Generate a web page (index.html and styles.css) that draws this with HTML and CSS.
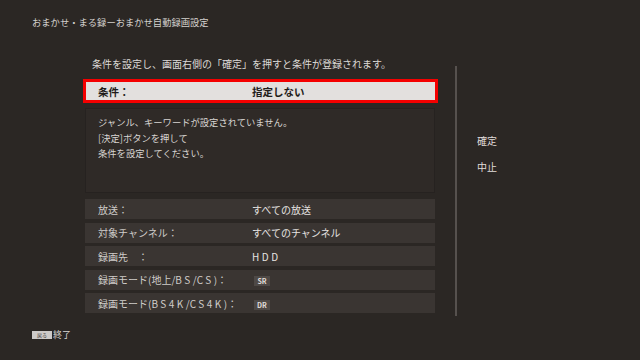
FILE: index.html
```html
<!DOCTYPE html>
<html lang="ja">
<head>
  <meta charset="UTF-8">
  <meta name="viewport" content="width=device-width, initial-scale=1.0">
  <title>おまかせ自動録画設定</title>
  <link rel="stylesheet" href="styles.css">
</head>
<body>
  <div class="page">
    <div class="title">おまかせ・まる録ーおまかせ自動録画設定</div>

    <div class="main">
      <div class="content">
        <div class="lead">条件を設定し、画面右側の「確定」を押すと条件が登録されます。</div>

        <div class="selected">
          <span class="label">条件：</span>
          <span class="value">指定しない</span>
        </div>

        <div class="message">
          ジャンル、キーワードが設定されていません。<br>
          [決定]ボタンを押して<br>
          条件を設定してください。
        </div>

        <div class="rows">
          <div class="row">
            <span class="label">放送：</span>
            <span class="value">すべての放送</span>
          </div>
          <div class="row">
            <span class="label">対象チャンネル：</span>
            <span class="value">すべてのチャンネル</span>
          </div>
          <div class="row">
            <span class="label">録画先　：</span>
            <span class="value latin">HDD</span>
          </div>
          <div class="row">
            <span class="label">録画モード(地上/<span class="latin">BS</span>/<span class="latin">CS</span>)：</span>
            <span class="value"><span class="badge">SR</span></span>
          </div>
          <div class="row">
            <span class="label">録画モード(<span class="latin">BS4K</span>/<span class="latin">CS4K</span>)：</span>
            <span class="value"><span class="badge">DR</span></span>
          </div>
        </div>
      </div>

      <div class="side">
        <div class="side-item">確定</div>
        <div class="side-item">中止</div>
      </div>
    </div>

    <div class="footer">
      <span class="key">戻る</span>
      <span class="key-text">終了</span>
    </div>
  </div>
</body>
</html>
```

FILE: styles.css
```css
html, body {
  margin: 0;
  padding: 0;
  background-color: #2b2724;
}
body {
  font-family: "Noto Sans CJK JP", "Noto Sans", sans-serif;
  color: #d9d6d3;
}
.page {
  width: 640px;
  height: 360px;
  display: flex;
  flex-direction: column;
  overflow: hidden;
}
.title {
  padding: 15px 0 0 32px;
  font-size: 9.3px;
  line-height: 14px;
  color: #d4d1ce;
}
.main {
  display: flex;
  margin-top: 27px;
}
.content {
  margin-left: 83px;
  width: 355px;
}
.lead {
  padding-left: 9px;
  font-size: 10px;
  line-height: 16px;
  margin-bottom: 7px;
  color: #dcd9d6;
}
.selected {
  display: flex;
  align-items: center;
  height: 18px;
  border: 3px solid #f40000;
  background-color: #e3e0de;
  color: #1f1c1a;
  font-size: 10.5px;
  font-weight: bold;
}
.selected .label {
  padding-left: 12px;
  width: 154px;
}
.message {
  margin: 5px 3px 0 2px;
  height: 72px;
  padding: 6px 12px 5px;
  border: 1px solid #262220;
  background-color: #2f2a27;
  font-size: 9.3px;
  line-height: 15.5px;
  color: #d8d5d2;
}
.rows {
  margin: 6px 3px 0 2px;
  display: flex;
  flex-direction: column;
  gap: 3.5px;
}
.row {
  display: flex;
  align-items: center;
  height: 20px;
  background-color: #3a3532;
  font-size: 10px;
}
.row .label {
  padding-left: 13px;
  width: 154px;
  color: #cfccc9;
}
.row .value {
  color: #e6e3e1;
}
.latin {
  letter-spacing: 2.5px;
}
.value.latin {
  letter-spacing: 2.5px;
}
.badge {
  display: inline-block;
  width: 16px;
  height: 10px;
  margin-left: 2px;
  background-color: #4e4946;
  color: #e0ddda;
  font-size: 7px;
  font-weight: bold;
  line-height: 10px;
  text-align: center;
}
.side {
  margin: 10px 0 0 17px;
  height: 183px;
  padding-top: 67px;
  border-left: 2px solid #56514e;
}
.side-item {
  padding-left: 20px;
  font-size: 10px;
  line-height: 16px;
  margin-bottom: 10px;
  color: #e0ddda;
}
.footer {
  margin-top: auto;
  padding: 0 0 19px 32px;
  display: flex;
  align-items: center;
}
.key {
  display: inline-block;
  width: 20px;
  height: 8px;
  background-color: #cdcac8;
  color: #3a3633;
  font-size: 5px;
  line-height: 8px;
  text-align: center;
}
.key-text {
  margin-left: 1px;
  font-size: 9px;
  line-height: 12px;
  color: #dcd9d6;
}
```
